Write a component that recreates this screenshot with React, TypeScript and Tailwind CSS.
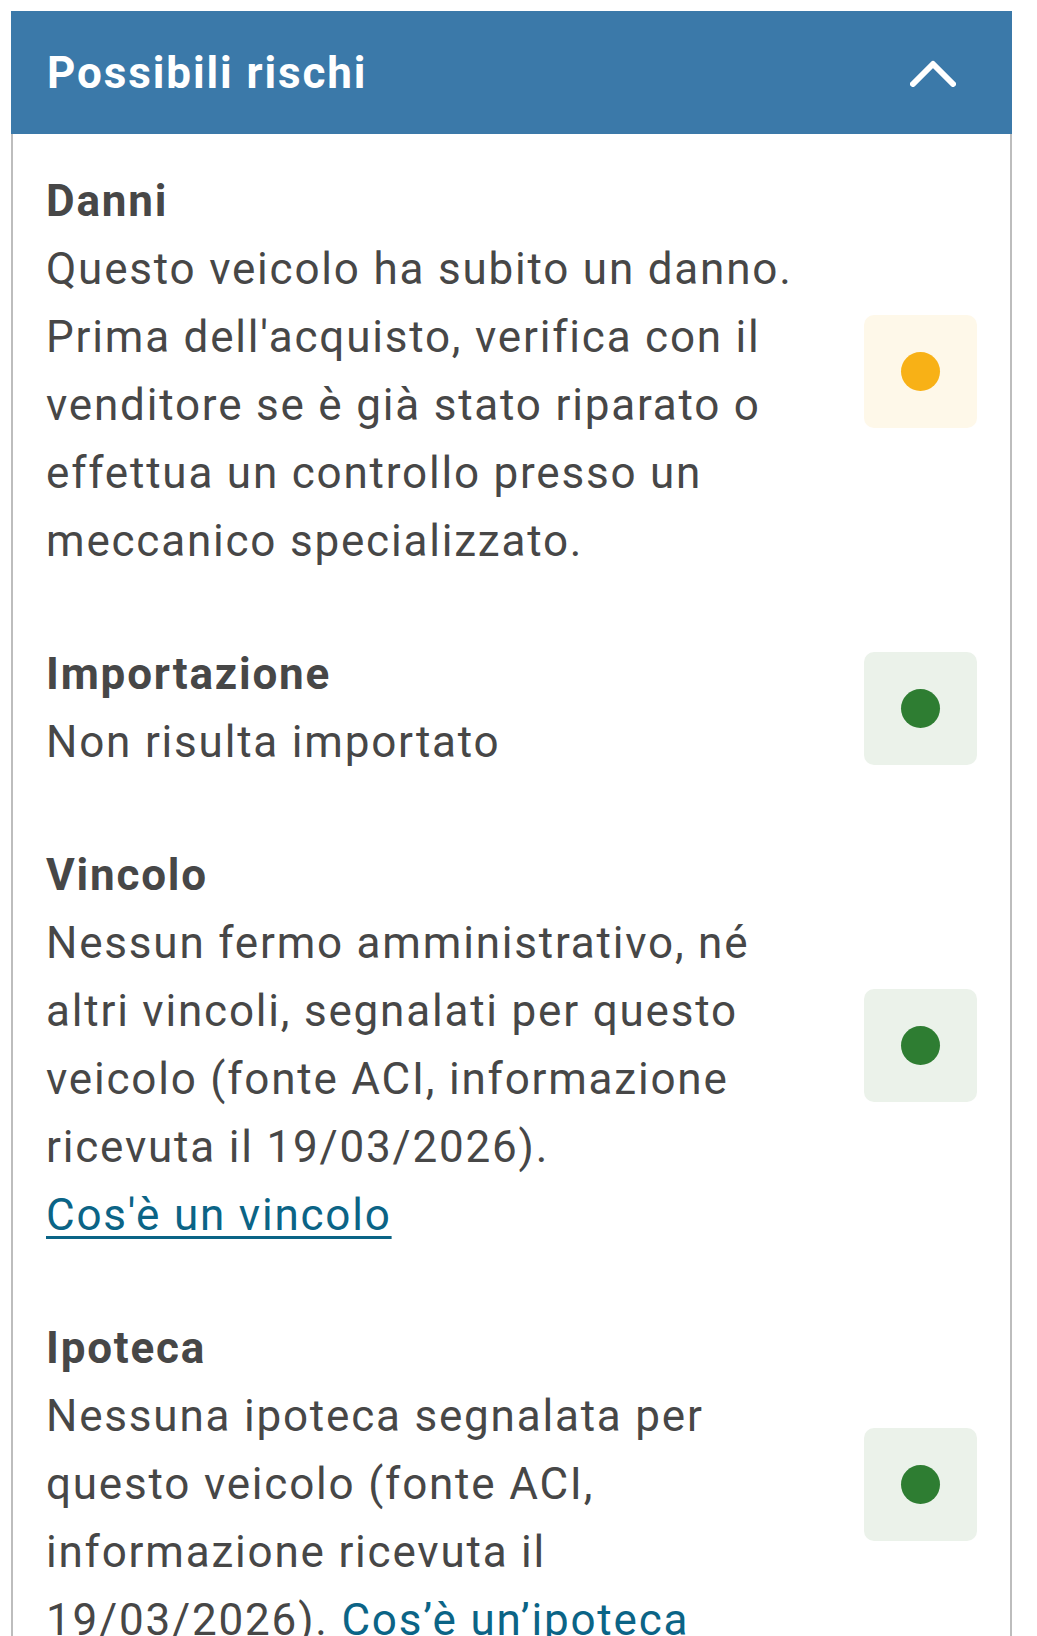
import React from 'react';

type Risk = {
  title: string;
  text: React.ReactNode;
  level: 'warn' | 'ok';
};

const risks: Risk[] = [
  {
    title: 'Danni',
    text: "Questo veicolo ha subito un danno. Prima dell'acquisto, verifica con il venditore se è già stato riparato o effettua un controllo presso un meccanico specializzato.",
    level: 'warn',
  },
  { title: 'Importazione', text: 'Non risulta importato', level: 'ok' },
  {
    title: 'Vincolo',
    text: (
      <>
        Nessun fermo amministrativo, né altri vincoli, segnalati per questo veicolo (fonte ACI, informazione ricevuta il 19/03/2026).
        <a href="#" className="block w-fit text-[#0b6486] underline decoration-[3px] underline-offset-[6px]">Cos'è un vincolo</a>
      </>
    ),
    level: 'ok',
  },
  {
    title: 'Ipoteca',
    text: (
      <>
        Nessuna ipoteca segnalata per questo veicolo (fonte ACI, informazione ricevuta il 19/03/2026).{' '}
        <a href="#" className="text-[#0b6486] underline decoration-[3px] underline-offset-[6px]">Cos’è un’ipoteca</a>
      </>
    ),
    level: 'ok',
  },
];

const Status: React.FC<{ level: Risk['level'] }> = ({ level }) => (
  <div
    className={
      level === 'warn'
        ? 'w-[113px] h-[113px] shrink-0 rounded-[10px] bg-[#fef8e9] flex items-center justify-center'
        : 'w-[113px] h-[113px] shrink-0 rounded-[10px] bg-[#ebf2ea] flex items-center justify-center'
    }
  >
    <span className={level === 'warn' ? 'w-[39px] h-[39px] rounded-full bg-[#f8b116]' : 'w-[39px] h-[39px] rounded-full bg-[#2e7d32]'} />
  </div>
);

export default function App() {
  return (
    <div className="min-h-screen bg-white pt-[11px] pl-[11px] pr-[25px]" style={{ fontFamily: 'Roboto, "Noto Sans", sans-serif' }}>
      <div className="border-x-2 border-[#bdbdbd] min-h-[1700px]">
        <div className="-mx-[2px] h-[123px] bg-[#3b79a9] flex items-center justify-between pl-[36px] pr-[56px]">
          <h2 className="text-white font-bold text-[44px] tracking-[1.9px]">Possibili rischi</h2>
          <svg width="46" height="28" viewBox="0 0 46 28" fill="none">
            <path d="M3 25L23 5L43 25" stroke="white" strokeWidth="6" strokeLinecap="round" strokeLinejoin="round" />
          </svg>
        </div>
        <div className="pl-[33px] pr-[33px] pt-[33px] text-[#474747] text-[44px] leading-[68px] tracking-[1.8px]">
          {risks.map((r) => (
            <div key={r.title} className="flex items-center justify-between mb-[65px]">
              <div className="w-[780px]">
                <h3 className="font-bold">{r.title}</h3>
                <p>{r.text}</p>
              </div>
              <Status level={r.level} />
            </div>
          ))}
        </div>
      </div>
    </div>
  );
}
